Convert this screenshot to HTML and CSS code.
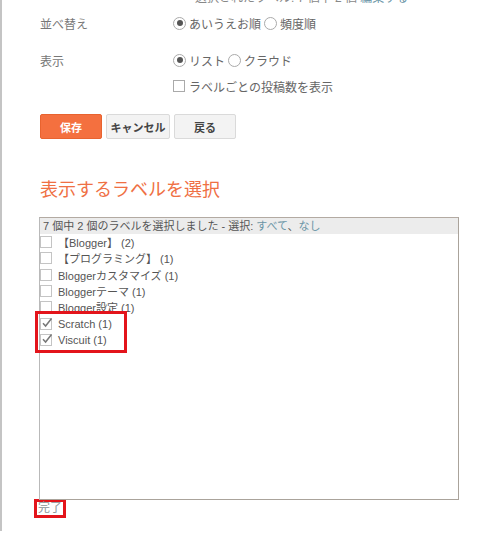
FILE: index.html
```html
<!DOCTYPE html>
<html lang="ja">
<head>
<meta charset="utf-8">
<link rel="stylesheet" href="styles.css">
</head>
<body>
<div class="page">
  <div class="cut">選択されたラベル: 7 個中 2 個 <span class="link">編集する</span></div>
  <div class="row r1">
    <div class="label">並べ替え</div>
    <div class="opts">
      <span class="radio on"></span><span class="opt">あいうえお順</span>
      <span class="radio"></span><span class="opt">頻度順</span>
    </div>
  </div>
  <div class="row r2">
    <div class="label">表示</div>
    <div class="opts">
      <span class="radio on"></span><span class="opt">リスト</span>
      <span class="radio"></span><span class="opt">クラウド</span>
    </div>
  </div>
  <div class="row r3">
    <div class="label"></div>
    <div class="opts">
      <span class="check"></span><span class="opt">ラベルごとの投稿数を表示</span>
    </div>
  </div>
  <div class="buttons">
    <button class="btn primary">保存</button>
    <button class="btn">キャンセル</button>
    <button class="btn">戻る</button>
  </div>
  <h2 class="heading">表示するラベルを選択</h2>
  <div class="listbox">
    <div class="listhead">7 個中 2 個のラベルを選択しました - 選択: <span class="link">すべて</span>、<span class="link">なし</span></div>
    <div class="item"><span class="cb"></span><span class="name">【Blogger】 (2)</span></div>
    <div class="item"><span class="cb"></span><span class="name">【プログラミング】 (1)</span></div>
    <div class="item"><span class="cb"></span><span class="name">Bloggerカスタマイズ (1)</span></div>
    <div class="item"><span class="cb"></span><span class="name">Bloggerテーマ (1)</span></div>
    <div class="item"><span class="cb"></span><span class="name">Blogger設定 (1)</span></div>
    <div class="item"><span class="cb"><svg viewBox="0 0 12 12" width="12" height="12"><path d="M2 6.2 L4.6 9 L10.5 1.5" fill="none" stroke="#777" stroke-width="1.5"/></svg></span><span class="name">Scratch (1)</span></div>
    <div class="item"><span class="cb"><svg viewBox="0 0 12 12" width="12" height="12"><path d="M2 6.2 L4.6 9 L10.5 1.5" fill="none" stroke="#777" stroke-width="1.5"/></svg></span><span class="name">Viscuit (1)</span></div>
    <div class="mark"></div>
  </div>
  <div class="done"><span class="done-text">完了</span></div>
</div>
</body>
</html>
```

FILE: styles.css
```css
html, body {
  margin: 0;
  padding: 0;
  background: #fff;
}
body {
  font-family: "Liberation Sans", "Noto Sans CJK JP", sans-serif;
  color: #555;
  overflow: hidden;
}
.page {
  border-left: 2px solid #c4c4c4;
  min-height: 543px;
  padding-left: 38px;
  box-sizing: border-box;
}
.cut {
  margin-top: -12px;
  height: 20px;
  line-height: 20px;
  font-size: 12px;
  color: #888;
  padding-left: 155px;
}
.link {
  color: #6a95a6;
}
.row {
  display: flex;
  align-items: center;
  height: 20px;
  font-size: 12px;
}
.r1 { margin-top: 5px; }
.r2 { margin-top: 17px; }
.r3 { margin-top: 6px; }
.label {
  width: 133px;
  color: #777;
}
.opts {
  display: flex;
  align-items: center;
}
.opt {
  color: #666;
  margin-right: 3px;
}
.radio {
  width: 11px;
  height: 11px;
  border: 1px solid #aaa;
  border-radius: 50%;
  margin-right: 3px;
  position: relative;
  box-sizing: content-box;
}
.radio.on::after {
  content: "";
  position: absolute;
  left: 2.5px;
  top: 2.5px;
  width: 6px;
  height: 6px;
  border-radius: 50%;
  background: #555;
}
.check {
  width: 10px;
  height: 10px;
  border: 1px solid #aaa;
  margin-right: 4px;
}
.buttons {
  display: flex;
  gap: 4px;
  margin-top: 18px;
}
.btn {
  width: 62px;
  height: 25px;
  padding: 0;
  border: 1px solid #dadada;
  border-radius: 2px;
  background: #f3f3f3;
  color: #444;
  font-family: "Liberation Sans", "Noto Sans CJK JP", sans-serif;
  font-size: 11px;
  font-weight: bold;
}
.btn:nth-child(2) { width: 64px; }
.btn.primary {
  background: #f4703f;
  border-color: #e8632f;
  color: #fff;
}
.heading {
  margin: 39px 0 0 0;
  font-size: 18px;
  line-height: 24px;
  font-weight: normal;
  color: #ef7044;
}
.listbox {
  position: relative;
  margin: 15px 0 0 -1px;
  width: 420px;
  height: 283px;
  box-sizing: border-box;
  border: 1px solid #aaa39b;
  border-left-color: #b9b9b9;
  border-top-color: #b3aaa2;
  font-size: 11px;
}
.listhead {
  background: #ececec;
  height: 16px;
  line-height: 16px;
  padding-left: 3px;
  color: #555;
}
.item {
  display: flex;
  align-items: center;
  height: 16.3px;
  color: #555;
}
.cb {
  width: 10px;
  height: 10px;
  border: 1px solid #c4c4c4;
  margin-right: 6px;
  position: relative;
}
.cb svg {
  position: absolute;
  left: 0;
  top: -2px;
}
.mark {
  position: absolute;
  left: -5px;
  top: 93px;
  width: 92px;
  height: 42px;
  box-sizing: border-box;
  border: 3px solid #e3141b;
}
.done {
  margin-top: -2px;
  margin-left: -6px;
}
.done-text {
  display: inline-block;
  border: 3px solid #e3141b;
  padding: 0 1px;
  height: 13px;
  line-height: 13px;
  font-size: 12px;
  color: #8a9499;
}
```
